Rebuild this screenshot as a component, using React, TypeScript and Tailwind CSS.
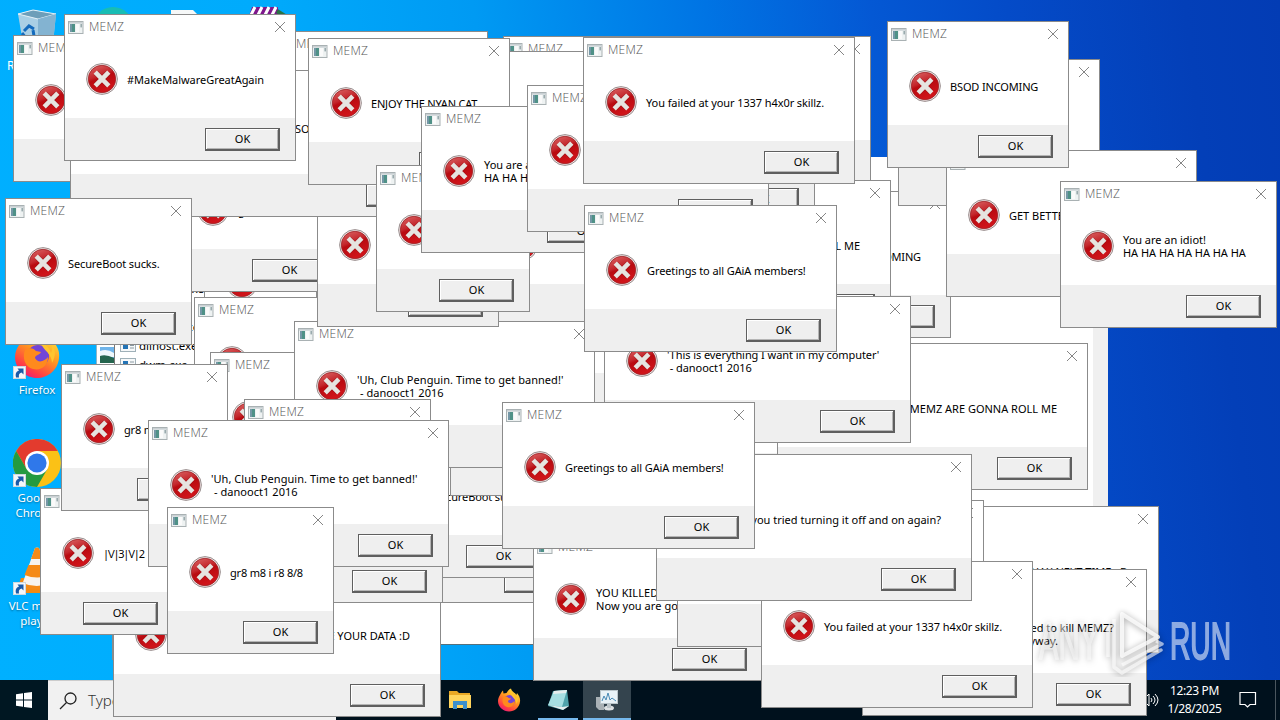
import React from "react";

type Dialog = { x: number; y: number; w: number; text?: string; dx?: number; end?: boolean; ls?: number };

const IDIOT = "You are an idiot!\nHA HA HA HA HA HA HA";
const PENGUIN = "'Uh, Club Penguin. Time to get banned!'\n - danooct1 2016";
const EVERYTHING = "'This is everything I want in my computer'\n - danooct1 2016";
const ROLL = "SOMEBODY ONCE TOLD ME THE MEMZ ARE GONNA ROLL ME";

const dialogs: Dialog[] = [
  { x: 112, y: 513, w: 300 },
  { x: 13, y: 35, w: 181, text: "BSOD INCOMING" },
  { x: 271, y: 31, w: 217, text: IDIOT },
  { x: 204, y: 218, w: 113 },
  { x: 175, y: 145, w: 168, text: "gr8 m8 i r8 8/8", ls: -0.2 },
  { x: 503, y: 36, w: 368 },
  { x: 770, y: 191, w: 181, text: "BSOD INCOMING", ls: -0.17 },
  { x: 484, y: 180, w: 407, text: ROLL, end: true },
  { x: 194, y: 297, w: 180, text: "#MakeMalwareGreatAgain" },
  { x: 113, y: 570, w: 328, text: "HAVE FUN TRYING TO RESTORE YOUR DATA :D", end: true },
  { x: 380, y: 456, w: 215 },
  { x: 371, y: 431, w: 186, text: "SecureBoot sucks.", ls: -0.12 },
  { x: 200, y: 456, w: 243 },
  { x: 681, y: 343, w: 407, text: ROLL, end: true },
  { x: 450, y: 349, w: 328 },
  { x: 586, y: 269, w: 200 },
  { x: 210, y: 352, w: 200 },
  { x: 294, y: 321, w: 301, text: PENGUIN, ls: 0.05 },
  { x: 317, y: 180, w: 182 },
  { x: 70, y: 70, w: 387, text: "SO\n ", dx: 162 },
  { x: 400, y: 51, w: 300 },
  { x: 600, y: 74, w: 215 },
  { x: 308, y: 38, w: 202, text: "ENJOY THE NYAN CAT", ls: -0.2 },
  { x: 898, y: 59, w: 202 },
  { x: 946, y: 150, w: 251, text: "GET BETTER HAX NEXT TIME xD" },
  { x: 887, y: 21, w: 182, text: "BSOD INCOMING", ls: -0.15 },
  { x: 1060, y: 181, w: 217, text: IDIOT, ls: -0.03 },
  { x: 376, y: 165, w: 154 },
  { x: 421, y: 106, w: 217, text: IDIOT, ls: -0.03 },
  { x: 527, y: 85, w: 242 },
  { x: 583, y: 37, w: 272, text: "You failed at your 1337 h4x0r skillz.", ls: -0.09 },
  { x: 604, y: 296, w: 307, text: EVERYTHING, ls: -0.07 },
  { x: 584, y: 205, w: 253, text: "Greetings to all GAiA members!", ls: -0.1 },
  { x: 5, y: 198, w: 187, text: "SecureBoot sucks.", ls: -0.12 },
  { x: 40, y: 488, w: 134, text: "|\\/|3|\\/|2", ls: -1.25 },
  { x: 61, y: 364, w: 167, text: "gr8 m8 i r8 8/8", ls: -0.2 },
  { x: 244, y: 399, w: 187 },
  { x: 148, y: 420, w: 301, text: PENGUIN, ls: 0.05 },
  { x: 167, y: 507, w: 167, text: "gr8 m8 i r8 8/8", ls: -0.2 },
  { x: 64, y: 14, w: 232, text: "#MakeMalwareGreatAgain", ls: -0.04 },
  { x: 533, y: 534, w: 230, text: "YOU KILLED MY TROJAN!\nNow you are going to die.", ls: 0.05 },
  { x: 908, y: 506, w: 251, text: "GET BETTER HAX NEXT TIME xD", end: true },
  { x: 677, y: 500, w: 307, text: EVERYTHING },
  { x: 862, y: 569, w: 285, text: "Why did you even tried to kill MEMZ?\nYour PC is fucked anyway." },
  { x: 761, y: 561, w: 272, text: "You failed at your 1337 h4x0r skillz.", ls: -0.09 },
  { x: 656, y: 454, w: 316, text: "Have you tried turning it off and on again?", end: true },
  { x: 502, y: 402, w: 253, text: "Greetings to all GAiA members!", ls: -0.1 },
];

const AppGlyph = () => (
  <svg width="16" height="13" viewBox="0 0 16 13" className="shrink-0">
    <rect x="0.5" y="0.5" width="14.5" height="12" fill="#eef2f2" stroke="#a9b1b3" />
    <rect x="1" y="1" width="14" height="1.6" fill="#c9d0d3" />
    <rect x="2" y="3" width="5" height="8" fill="#4f9187" />
    <rect x="2" y="3" width="2" height="8" fill="#7497a6" />
    <rect x="8" y="3" width="3" height="8" fill="#fafafa" />
    <rect x="12.4" y="3" width="1.6" height="3.4" fill="#9aabae" />
  </svg>
);

const ErrorGlyph = () => (
  <svg width="32" height="32" viewBox="0 0 32 32" className="shrink-0">
    <defs>
      <linearGradient id="red" x1="0" y1="0" x2="0.4" y2="1">
        <stop offset="0" stopColor="#dd6a6a" />
        <stop offset="0.45" stopColor="#c4272c" />
        <stop offset="0.55" stopColor="#b90a10" />
        <stop offset="1" stopColor="#d0141a" />
      </linearGradient>
    </defs>
    <circle cx="16" cy="16" r="15.4" fill="#f1e6e6" stroke="#8f8585" strokeWidth="0.9" />
    <circle cx="16" cy="16" r="13.7" fill="url(#red)" stroke="#9c2226" strokeWidth="0.8" />
    <path d="M9.8 9.8 22.2 22.2M22.2 9.8 9.8 22.2" stroke="#7d1014" strokeWidth="5.6" opacity="0.5" />
    <path d="M9.2 9.2 22.8 22.8M22.8 9.2 9.2 22.8" stroke="#e6e4e0" strokeWidth="4.6" />
  </svg>
);

const ErrorDialog = ({ x, y, w, text = "", dx = 0, end, ls = 0 }: Dialog) => (
  <section
    className="absolute flex h-[147px] flex-col overflow-hidden border border-[#8b8b8b] bg-white"
    style={{ left: x, top: y, width: w }}
  >
    <header className="flex h-[25px] shrink-0 items-center pr-[9px] pl-[3px]">
      <AppGlyph />
      <span className="mb-[2px] ml-[5px] flex-1 font-['Open_Sans',sans-serif] text-[12px] leading-none font-light tracking-[0.2px] text-[#555]">MEMZ</span>
      <svg width="12" height="12" viewBox="0 0 12 12" className="mb-[2px] shrink-0">
        <path d="M1 1 11 11M11 1 1 11" stroke="#858585" strokeWidth="1" />
      </svg>
    </header>
    <div className="flex h-[78px] shrink-0 items-center pl-[21px]">
      <ErrorGlyph />
      <p
        className={
          "text-[11px] leading-[13px] whitespace-pre text-black " +
          (end ? "ml-auto mr-[30px]" : "ml-[9px]")
        }
        style={{ paddingLeft: dx, letterSpacing: ls }}
      >
        {text}
      </p>
    </div>
    <footer className="flex h-[42px] shrink-0 items-start justify-end bg-[#efefef] pt-[10px] pr-[15px]">
      <div className="flex h-[23px] w-[75px] items-center justify-center border border-r-2 border-b-2 border-[#5f5f5f] bg-[#efefef] pb-[2px] pl-[1px] text-[11px] leading-none shadow-[inset_1px_1px_0_#fff,inset_-1px_-1px_0_#b5b5b5]">
        OK
      </div>
    </footer>
  </section>
);

const Firefox = ({ size }: { size: number }) => (
  <svg width={size} height={size} viewBox="0 0 48 48">
    <defs>
      <linearGradient id="fx" x1="0.8" y1="0" x2="0.2" y2="1">
        <stop offset="0" stopColor="#ffe83c" />
        <stop offset="0.45" stopColor="#ff9420" />
        <stop offset="0.8" stopColor="#ff3b47" />
        <stop offset="1" stopColor="#e31587" />
      </linearGradient>
    </defs>
    <path d="M6 14C8 9 10 7 12 5l1 6 6-1c3-5 6-8 9-9 1 6 8 8 11 13l1-4c4 5 7 10 6 17-1 12-11 20-22 20S2 38 2 26c0-5 2-9 4-12Z" fill="url(#fx)" />
    <circle cx="25" cy="25" r="11" fill="#7245d8" />
    <path d="M12 19c4-3 9-2 11 1l5 1c-1 3-6 3-6 6 3 6 10 3 13-1 0 9-7 14-15 12S9 27 12 19Z" fill="#ff8a1d" />
    <path d="M27 5c1 8 9 9 11 17 2-4 1-7 0-10 5 6 5 13 1 20 0-12-14-14-12-27Z" fill="#ffc52e" />
  </svg>
);

const Chrome = () => (
  <svg width="48" height="48" viewBox="0 0 48 48">
    <circle cx="24" cy="24" r="24" fill="#fbc116" />
    <path d="M3.2 12A24 24 0 0 1 44.8 12H24L13.6 30Z" fill="#e33b2e" />
    <path d="M3.2 12A24 24 0 0 0 24 48L34.4 30 24 36 13.6 30Z" fill="#249a41" />
    <circle cx="24" cy="24" r="12" fill="#fff" />
    <circle cx="24" cy="24" r="9.6" fill="#2f78ea" />
  </svg>
);

const Vlc = () => (
  <svg width="48" height="48" viewBox="0 0 48 48">
    <path d="M8 31h32l5 15H3Z" fill="#f28a12" />
    <path d="M22 1q2-1 4 0l13 37q-15 7-30 0Z" fill="#f7f3ee" />
    <path d="M22 1q2-1 4 0l4 11H18ZM15.500 18h17l4 10q-12 5-25 0ZM9.500 36q14 6 29 0l1 4q-15 6-31 0Z" fill="#f58a16" />
  </svg>
);

const Shortcut = () => (
  <svg width="13" height="13" viewBox="0 0 13 13" className="absolute bottom-0 left-0">
    <rect x="0.500" y="0.500" width="12" height="12" fill="#f4f7fa" stroke="#cfd8de" />
    <path d="M3 11.500C2 8 3 5.500 6 4.500L4.500 2.500H10.500V8.500L8.500 6.500C6 7 5.500 9 6 11.500Z" fill="#1b5aa8" />
  </svg>
);

const DeskIcon = ({ y, label, children }: { y: number; label: string; children: React.ReactNode }) => (
  <div className="absolute left-0 flex w-[74px] flex-col items-center" style={{ top: y }}>
    <div className="relative h-[48px] w-[48px]">
      {children}
      <Shortcut />
    </div>
    <span className="mt-[3px] text-center text-[11.500px] leading-[15px] whitespace-pre text-white [text-shadow:0_1px_2px_#0006]">{label}</span>
  </div>
);

const ExeRow = ({ name }: { name: string }) => (
  <div className="flex h-[19px] items-center gap-[3px] pl-[5px]">
    <svg width="16" height="13" viewBox="0 0 16 13">
      <rect x="0.500" y="0.500" width="15" height="12" fill="#f6f8f9" stroke="#9fb0b8" />
      <rect x="3" y="3" width="5" height="7" fill="#2473b5" />
      <path d="M10 4h4M10 6.500h4M10 9h4" stroke="#8a9aa3" />
    </svg>
    <span className="text-[11.500px] leading-none whitespace-pre">{name}</span>
  </div>
);

export default function App() {
  return (
    <main className="relative h-[720px] w-[1280px] overflow-hidden bg-[linear-gradient(83deg,#00b0ff_0%,#00abfc_25%,#009af3_41%,#0074e4_58%,#0458d4_70%,#044bc8_80%,#033fb8_93%,#033cb4_100%)] font-['Noto_Sans','Open_Sans',sans-serif]">
      {/* desktop shortcuts */}
      <svg width="300" height="50" viewBox="0 0 300 50" className="absolute top-0 left-0">
        <path d="M18 14 33 10l23 4-3 29H23Z" fill="#a9cfe5" />
        <path d="M18 14 33 10l23 4-18 5Z" fill="#6d9eb9" stroke="#e4f1f8" />
        <path d="m38 19 18-5-3 29H38Z" fill="#83b3d1" />
        <path d="m24 31 5-5 5 3M33 30l1 6M22 33l3 4" fill="none" stroke="#146bbd" strokeWidth="3" />
        <circle cx="113" cy="27" r="20" fill="#18bdb4" />
        <path d="M171 10h22l7 7v10h-29Z" fill="#f6f8f8" />
        <path d="M252 7h26v12h-30Z" fill="#7e168c" />
        <path d="m250 17 5-10M257 17l5-10M264 17l5-10M271 17l5-10" stroke="#fff" strokeWidth="3" />
        <path d="M277 11l8 5" stroke="#297344" strokeWidth="4" />
      </svg>
      <span className="absolute top-[58px] left-[7px] text-[12px] leading-[16px] text-white">Recycle Bin</span>
      <DeskIcon y={331} label="Firefox"><Firefox size={48} /></DeskIcon>
      <DeskIcon y={439} label={"Google\nChrome"}><Chrome /></DeskIcon>
      <DeskIcon y={547} label={"VLC media\nplayer"}><Vlc /></DeskIcon>

      {/* text editor and process list underneath the dialogs */}
      <div className="absolute top-[157px] left-[300px] flex h-[488px] w-[808px] justify-end border-b border-[#55707c] bg-white">
        <div className="w-[15px] bg-[#f0f0f0]" />
      </div>
      <div className="absolute top-[280px] left-[96px] flex h-[160px] w-[204px] border-l border-[#8eb5c7] bg-white">
        <div className="flex w-[18px] flex-col border-r border-[#777] pt-[67px] pl-[3px]">
          <svg width="14" height="16" viewBox="0 0 14 16">
            <rect width="14" height="16" fill="#6fb4ea" />
            <path d="M0 4q7-3 14 2v4H0Z" fill="#eef7fb" />
            <path d="M0 9q6-2 14 2v5H0Z" fill="#25654e" />
          </svg>
        </div>
        <div className="-mt-px flex flex-col">
          <ExeRow name="conhost.exe.exe" />
          <ExeRow name="csrss.exe    EXE" />
          <ExeRow name="ctfmon.exe  EXE" />
          <ExeRow name="dllhost.exe" />
          <ExeRow name="dwm.exe" />
        </div>
      </div>

      {/* taskbar */}
      <div className="absolute top-[680px] left-0 flex h-[40px] w-full bg-[#00111d] text-white">
        <div className="flex w-[48px] items-center justify-center bg-[#001722]">
          <svg width="16" height="16" viewBox="0 0 16 16">
            <path d="M0 2.300 7 1.300V7.500H0ZM8 1.100 16 0V7.500H8ZM0 8.500H7V14.700L0 13.700ZM8 8.500H16V16L8 14.900Z" fill="#fff" />
          </svg>
        </div>
        <div className="flex w-[288px] items-center border-t border-[#ccc] bg-[#f1f1f1] pl-[11px] text-[#333]">
          <svg width="18" height="18" viewBox="0 0 18 18">
            <circle cx="11.500" cy="6.500" r="5.500" fill="none" stroke="#222" strokeWidth="1.300" />
            <path d="M7.500 10.500 1 17" stroke="#222" strokeWidth="1.300" />
          </svg>
          <span className="ml-[11px] text-[15px] font-light">Type here to search</span>
        </div>
        <div className="ml-[100px] flex gap-px">
          <div className="flex w-[48px] items-center justify-center">
            <svg width="22" height="20" viewBox="0 0 22 20">
              <path d="M0 1h8l2 2h11v15H0Z" fill="#e9a825" />
              <path d="M0 5h22v13H0Z" fill="#ffd45c" />
              <path d="M4 19V11h14v8h-4v-4H8v4Z" fill="#3c8fcb" />
            </svg>
          </div>
          <div className="flex w-[48px] items-center justify-center"><Firefox size={24} /></div>
          <div className="flex w-[48px] flex-col items-center justify-between pt-[8px]">
            <svg width="24" height="24" viewBox="0 0 24 24">
              <path d="m7 3 14-1 2 16-6 4-15-4Z" fill="#4fa3ab" />
              <path d="m8 3 13-1-5 17-14-2Z" fill="#a6dfe2" />
              <path d="m8 3 13-1-1 3L7 6Z" fill="#e6eeee" />
              <path d="m2 17 14 2 7-1-6 4Z" fill="#e5edee" />
            </svg>
            <div className="h-[2px] w-[40px] bg-[#76b9ed]" />
          </div>
          <div className="flex w-[48px] items-center justify-center bg-[#34444e] shadow-[inset_0_-2px_0_#76b9ed]">
            <svg width="24" height="24" viewBox="0 0 24 24">
              <path d="M1 9h8v13H4l-3-3Z" fill="#a9b1b5" />
              <rect x="5.500" y="2.500" width="17" height="13" fill="#e8f2f7" stroke="#bac5ca" />
              <path d="m7 13 2-5 2 4 2-7 2 7 2-2 4 3" fill="none" stroke="#4688b4" />
              <ellipse cx="14" cy="20" rx="5" ry="2.500" fill="#dde1e3" />
              <path d="M12 16h4v4h-4Z" fill="#bcc4c8" />
            </svg>
          </div>
        </div>
        <div className="ml-auto flex">
          <div className="flex w-[16px] items-center">
            <svg width="16" height="16" viewBox="0 0 16 16" fill="none" stroke="#fff">
              <path d="M1 5h2l3-3v12l-3-3H1ZM8 6q2 2 0 4M10 4q4 4 0 8M12 2q6 6 0 12" />
            </svg>
          </div>
          <div className="ml-[3px] flex w-[65px] flex-col items-center justify-center text-[12px] leading-[18px] tracking-[-0.35px]">
            <span>12:23 PM</span>
            <span>1/28/2025</span>
          </div>
          <div className="ml-[6px] flex w-[29px] items-center justify-center">
            <svg width="18" height="18" viewBox="0 0 18 18">
              <path d="M1 1.500h15.500v12H11L8.500 16 6 13.500H1Z" fill="none" stroke="#fff" strokeWidth="1.200" />
            </svg>
          </div>
          <div className="ml-[13px] w-[5px] border-l border-[#4a565e]" />
        </div>
      </div>

      {dialogs.map((d, i) => (
        <ErrorDialog key={i} {...d} />
      ))}

      {/* watermark */}
      <div className="absolute top-[605px] left-[1034px] h-[72px] w-[204px]">
        <svg width="204" height="72" viewBox="0 0 204 72" fontFamily="Liberation Sans Narrow, Liberation Sans, sans-serif">
          <g className="[filter:drop-shadow(0_1px_3px_#0008)]">
            <text x="5" y="54" fontSize="51" textLength="60" lengthAdjust="spacingAndGlyphs" fill="#fff" stroke="#fff" strokeWidth="1.500" opacity="0.45">ANY</text>
          </g>
          <g className="[filter:drop-shadow(0_1px_3px_#0007)]" fill="none" stroke="#fff" strokeOpacity="0.75" strokeWidth="4" strokeLinejoin="round">
            <path d="M88 9v42l36-19Z" />
            <path d="M80 14v48l8 6 38-23M74 20v32M118 50l9-5-38 22M122 36l6 3-40 21" strokeOpacity="0.6" strokeWidth="3.500" />
          </g>
          <text x="136" y="54" fontSize="51" textLength="61" lengthAdjust="spacingAndGlyphs" fill="#fff" stroke="#fff" strokeWidth="2" opacity="0.55">RUN</text>
        </svg>
      </div>
    </main>
  );
}
